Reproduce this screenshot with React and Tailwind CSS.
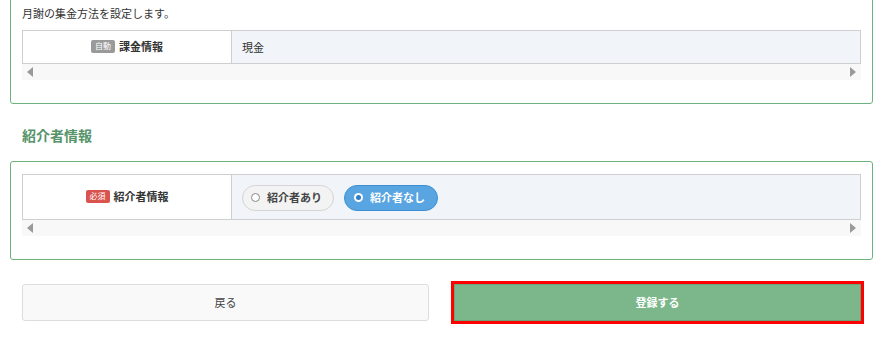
import React from "react";

const font = { fontFamily: '"Noto Sans CJK JP", "Noto Sans", sans-serif' };

function ScrollStrip() {
  return (
    <div className="flex h-[16px] items-center justify-between bg-[#f8f8f8] px-[5px]">
      <span className="h-0 w-0 border-y-[5px] border-r-[6px] border-y-transparent border-r-[#9a9a9a]" />
      <span className="h-0 w-0 border-y-[5px] border-l-[6px] border-y-transparent border-l-[#9a9a9a]" />
    </div>
  );
}

function Badge({ children, tone }) {
  return (
    <span
      className={
        "mr-[4px] inline-flex h-[13px] items-center rounded-[2px] px-[4px] text-[8px] leading-none text-white " +
        (tone === "red" ? "bg-[#d9534f]" : "bg-[#9a9a9a]")
      }
    >
      {children}
    </span>
  );
}

function Row({ badge, tone, label, height, children }) {
  return (
    <div className={"flex border border-[#cfcfcf] " + height}>
      <div className="flex w-[209px] shrink-0 items-center justify-center border-r border-[#cfcfcf] bg-white pb-[2px]">
        <Badge tone={tone}>{badge}</Badge>
        <span className="text-[11px] font-bold text-[#333]">{label}</span>
      </div>
      <div className="flex flex-1 items-center bg-[#f1f4f9] px-[10px]">{children}</div>
    </div>
  );
}

export default function App() {
  return (
    <div className="h-[356px] w-[881px] overflow-hidden bg-white" style={font}>
      <div className="-mt-[10px] ml-[10px] mr-[8px] rounded-[3px] border border-[#6cb27c] pb-[23px] pl-[11px] pr-[11px] pt-[14px]">
        <p className="mb-[9px] text-[11px] leading-[16px] text-[#333]">月謝の集金方法を設定します。</p>
        <Row badge="自動" label="課金情報" height="h-[34px]">
          <span className="text-[11px] text-[#333]">現金</span>
        </Row>
        <ScrollStrip />
      </div>

      <h2 className="mx-[22px] mb-[16px] mt-[21px] text-[14px] font-bold leading-[20px] text-[#56946a]">紹介者情報</h2>

      <div className="ml-[10px] mr-[8px] rounded-[3px] border border-[#6cb27c] pb-[23px] pl-[11px] pr-[11px] pt-[12px]">
        <Row badge="必須" tone="red" label="紹介者情報" height="h-[46px]">
          <div className="flex gap-[10px] pt-[1px]">
            <label className="flex h-[26px] items-center gap-[7px] rounded-full border border-[#d4d4d4] bg-[#f3f3f3] pl-[8px] pr-[11px] text-[11px] font-bold text-[#444]">
              <span className="h-[9px] w-[9px] rounded-full border border-[#888] bg-white" />
              紹介者あり
            </label>
            <label className="flex h-[26px] items-center gap-[7px] rounded-full border border-[#3d8fd1] bg-[#58a5e2] pl-[9px] pr-[12px] text-[11px] font-bold text-white">
              <span className="flex h-[9px] w-[9px] items-center justify-center rounded-full bg-white">
                <span className="h-[5px] w-[5px] rounded-full bg-[#2f7fc4]" />
              </span>
              紹介者なし
            </label>
          </div>
        </Row>
        <ScrollStrip />
      </div>

      <div className="mt-[24px] flex gap-[25px] pl-[22px] pr-[20px]">
        <button className="h-[37px] flex-1 rounded-[3px] border border-[#dddddd] bg-[#f9f9f9] text-[11px] text-[#444]">
          戻る
        </button>
        <button className="h-[37px] flex-1 border border-[#6aa57a] bg-[#7bb78a] text-[11px] font-bold text-white outline-[3px] outline-offset-0 outline-[#ff0000]">
          登録する
        </button>
      </div>
    </div>
  );
}
